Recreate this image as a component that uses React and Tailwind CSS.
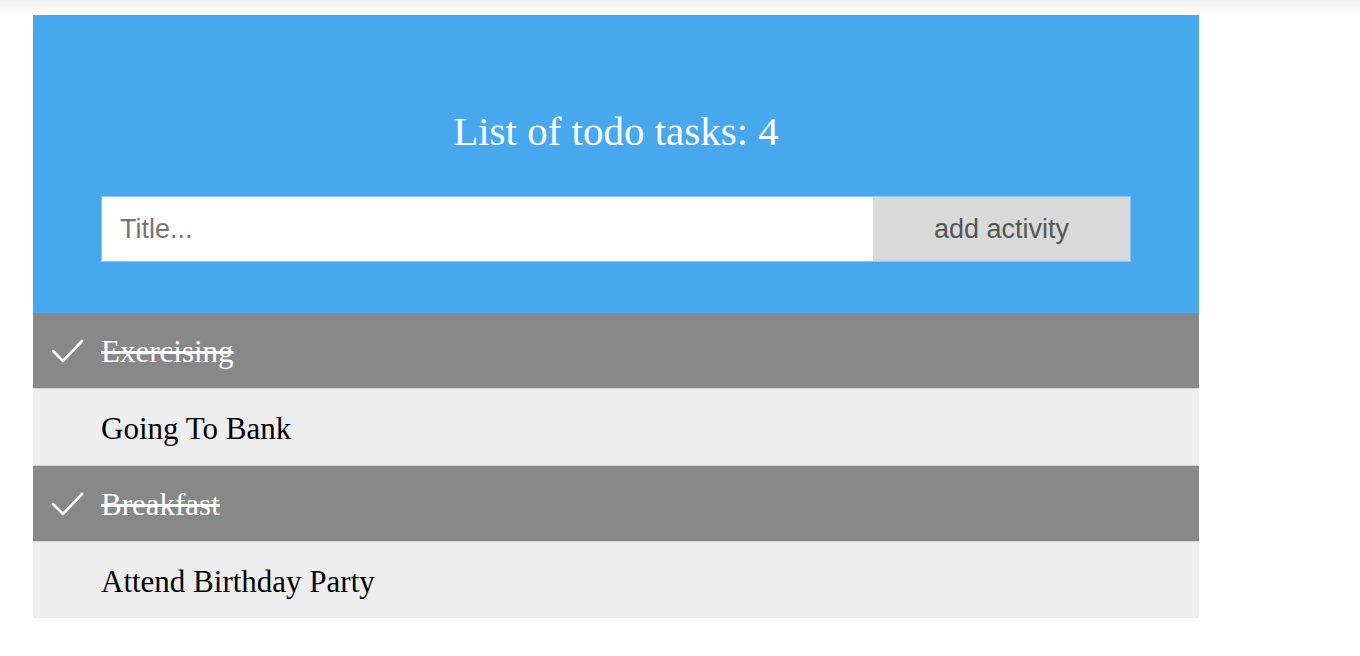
const tasks = [
  { title: 'Exercising', done: true },
  { title: 'Going To Bank', done: false },
  { title: 'Breakfast', done: true },
  { title: 'Attend Birthday Party', done: false },
];

function Check() {
  return (
    <svg width="34" height="26" viewBox="0 0 34 26" className="absolute left-[17px] top-[25px]">
      <polyline points="3,13 13,23 32,3" fill="none" stroke="white" strokeWidth="2.6" strokeLinecap="round" strokeLinejoin="round" />
    </svg>
  );
}

export default function App() {
  return (
    <div className="min-h-[656px] bg-white">
      <div className="h-[15px] bg-gradient-to-b from-[#ededed] via-[#f8f8f8] to-white" />
      <div className="ml-[33px] w-[1166px]">
        <div className="h-[298px] bg-[#48a8ed] pt-[94px] px-[68px]">
          <h1 className="text-center text-white text-[41px] leading-[44px] font-['Liberation_Serif',serif]">
            List of todo tasks: 4
          </h1>
          <div className="mt-[43px] flex h-[66px] border border-[#8cc6f2]">
            <input
              type="text"
              placeholder="Title..."
              className="flex-1 bg-white pl-[18px] text-[27px] text-[#333] placeholder:text-[#757575] outline-none font-['Liberation_Sans',sans-serif]"
            />
            <button className="w-[257px] bg-[#d9d9d9] text-[27px] text-[#555555] font-['Liberation_Sans',sans-serif]">
              add activity
            </button>
          </div>
        </div>
        <ul>
          {tasks.map((t) => (
            <li
              key={t.title}
              className={`relative h-[76.25px] flex items-center pl-[68px] pt-[4px] text-[31px] font-['Liberation_Serif',serif] border-b border-[#d0d0d0] last:border-b-0 ${
                t.done ? 'bg-[#888888] text-white line-through' : 'bg-[#eeeeee] text-black'
              }`}
            >
              {t.done && <Check />}
              {t.title}
            </li>
          ))}
        </ul>
      </div>
    </div>
  );
}
